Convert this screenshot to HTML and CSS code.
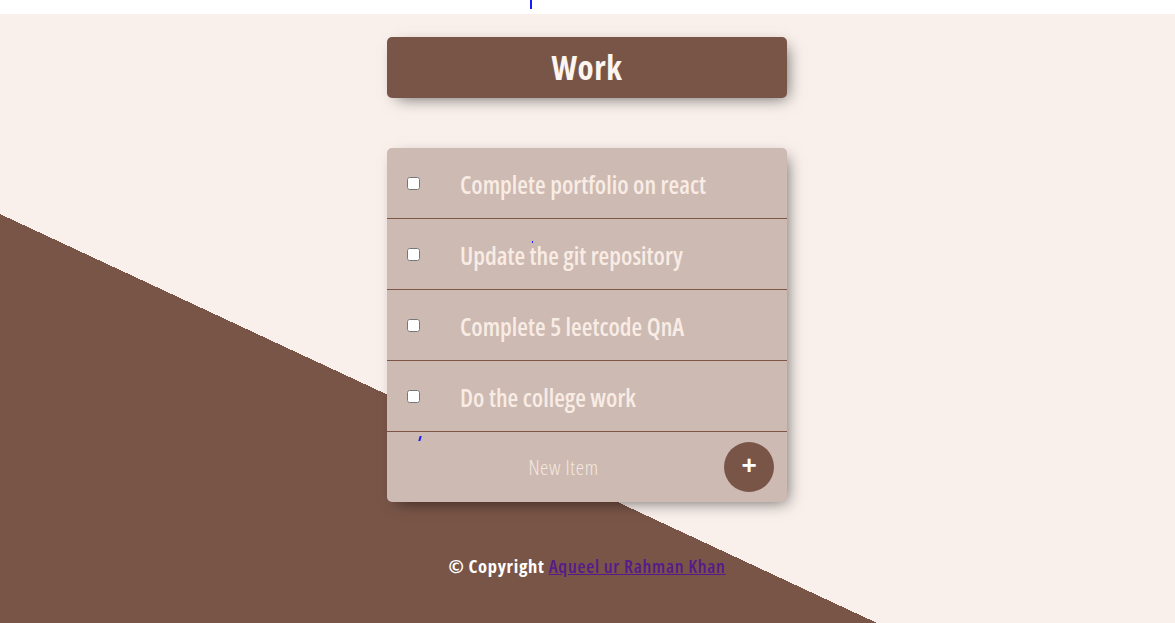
FILE: index.html
```html
<!DOCTYPE html>
<html lang="en">
<head>
<meta charset="utf-8">
<title>To-Do List</title>
<link rel="stylesheet" href="styles.css">
</head>
<body>
<div class="topbar"><span class="caret"></span></div>
<main class="page">
  <div class="box heading">
    <h1>Work</h1>
  </div>
  <div class="box list">
    <div class="item"><input type="checkbox"><p>Complete portfolio on react</p></div>
    <div class="item"><input type="checkbox"><p>Update the git repository</p></div>
    <div class="item"><input type="checkbox"><p>Complete 5 leetcode QnA</p></div>
    <div class="item"><input type="checkbox"><p>Do the college work</p></div>
    <form class="item new-item">
      <input type="text" name="newItem" placeholder="New Item" autocomplete="off">
      <button type="button" name="list">+</button>
    </form>
    <span class="dot dot-a"></span>
    <span class="dot dot-b"></span>
  </div>
  <footer class="footer">© Copyright <a href="#">Aqueel ur Rahman Khan</a></footer>
</main>
</body>
</html>
```

FILE: styles.css
```css
html {
  background:
    linear-gradient(#ffffff, #ffffff) 0 0 / 100% 14px no-repeat,
    linear-gradient(25deg, #795548 50%, #f9f0eb 50%) 0 0 / 100% 976px no-repeat,
    #f9f0eb;
  font-family: "Open Sans", "Liberation Sans", sans-serif;
  font-stretch: condensed;
}

body {
  margin: 0;
}

.topbar {
  height: 14px;
  position: relative;
}

.caret {
  position: absolute;
  left: 530px;
  top: 0;
  width: 2px;
  height: 9px;
  background: #1a1aff;
}

.page {
  padding-top: 23px;
  padding-right: 1px;
}

.box {
  width: 400px;
  margin: 0 auto 50px;
  border-radius: 5px;
  box-shadow: 5px 5px 15px -5px rgba(0, 0, 0, 0.6);
}

.heading {
  background: #795548;
  text-align: center;
}

h1 {
  margin: 0;
  padding: 10px;
  font-size: 33px;
  line-height: 41px;
  font-weight: 700;
  letter-spacing: 0.6px;
  color: #fdf5ef;
}

.list {
  background: #cdbab2;
  position: relative;
}

.item {
  min-height: 70px;
  display: flex;
  align-items: center;
  border-bottom: 1px solid #7d5646;
}

input[type="checkbox"] {
  margin: 20px;
  width: 13px;
  height: 13px;
  flex: none;
}

.item p {
  margin: 0;
  padding: 22px 20px 18px;
  font-size: 24.5px;
  line-height: 30px;
  font-weight: 600;
  color: #f8ece5;
  white-space: nowrap;
}

.new-item {
  margin: 0 0 0 20px;
  gap: 4px;
  border-bottom: 0;
}

.new-item input[type="text"] {
  width: 313px;
  height: 60px;
  border: none;
  background: transparent;
  text-align: center;
  font-family: "Open Sans", sans-serif;
  font-stretch: condensed;
  font-weight: 300;
  font-size: 21px;
  letter-spacing: 0.6px;
  color: #f6e9e2;
  padding: 0;
  outline: none;
}

.new-item input[type="text"]::placeholder {
  color: #f4e7df;
  opacity: 1;
}

.new-item button {
  width: 50px;
  height: 50px;
  border-radius: 50%;
  border: 0;
  background: #795548;
  color: #ffffff;
  font-family: "Liberation Sans", sans-serif;
  font-weight: 700;
  font-size: 26px;
  line-height: 1;
  padding: 0 0 5px;
}

.dot {
  position: absolute;
  background: #1a1aff;
}

.dot-a {
  left: 145px;
  top: 93px;
  width: 1px;
  height: 2px;
}

.dot-b {
  left: 32px;
  top: 288px;
  width: 2px;
  height: 5px;
  transform: skewX(-15deg);
}

.footer {
  text-align: center;
  color: #ffffff;
  font-weight: 700;
  font-size: 18.5px;
  letter-spacing: 0.7px;
  line-height: 28px;
}

.footer a {
  color: #551a8b;
  font-weight: 600;
}
```
